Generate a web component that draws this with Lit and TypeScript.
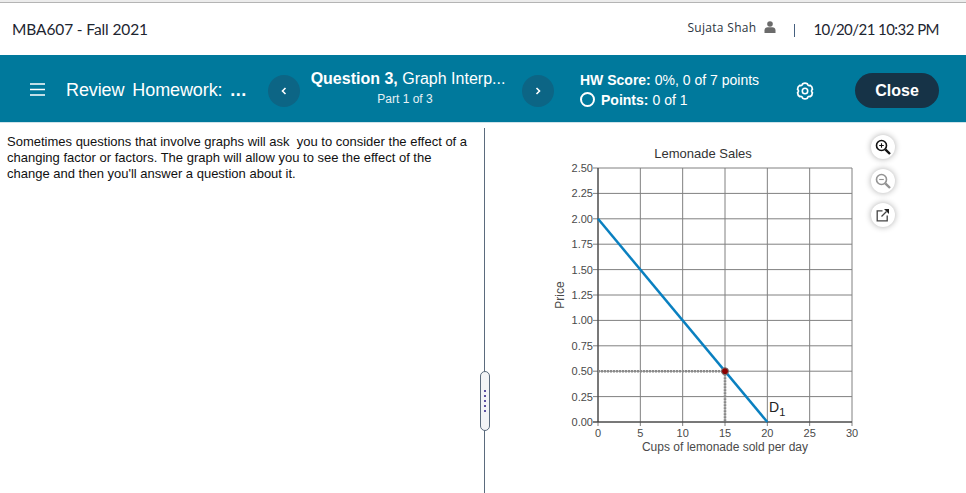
import { LitElement, html, svg, css } from 'lit';
import { customElement } from 'lit/decorators.js';

// plot coordinates, measured in app-level pixels
const X0 = 598;
const X30 = 852;
const Y0 = 422;
const Y250 = 168;
const px = (v: number) => X0 + ((X30 - X0) * v) / 30;
const py = (v: number) => Y0 - ((Y0 - Y250) * v) / 2.5;

const xTicks = [0, 5, 10, 15, 20, 25, 30];
const yTicks = [0, 0.25, 0.5, 0.75, 1, 1.25, 1.5, 1.75, 2, 2.25, 2.5];

// six soft lobes around the centre of an 18x18 box
const gearPath = () => {
  const pt = (deg: number, r: number) => {
    const a = (deg * Math.PI) / 180;
    return `${(9 + r * Math.sin(a)).toFixed(2)} ${(9 - r * Math.cos(a)).toFixed(2)}`;
  };
  let d = `M${pt(-18, 7.6)}`;
  for (let i = 0; i < 6; i++) {
    const c = i * 60;
    d += ` Q${pt(c, 8.6)} ${pt(c + 18, 7.6)} Q${pt(c + 30, 5.6)} ${pt(c + 42, 7.6)}`;
  }
  return d + 'Z';
};

@customElement('app-root')
export class AppRoot extends LitElement {
  static styles = css`
    :host {
      display: block;
      width: 966px;
      height: 493px;
      overflow: hidden;
      background: #fff;
      font-family: 'Liberation Sans', Arial, sans-serif;
      position: relative;
    }

    .topline {
      height: 3px;
      box-sizing: border-box;
      background: #ececec;
      border-bottom: 1px solid #b4b4b4;
    }

    .course {
      height: 52px;
      display: flex;
      align-items: center;
      padding: 0 27px 0 12px;
      color: #1d2530;
    }

    .course-name {
      font: 15.5px 'Lato', sans-serif;
      flex: 1;
      margin-top: -1px;
      letter-spacing: -0.12px;
    }

    .user {
      font: 12px 'Open Sans', sans-serif;
      color: #2b3440;
      letter-spacing: 0.3px;
      margin-top: -3px;
    }

    .user-icon {
      margin: -4px 0 0 8px;
    }

    .sep {
      width: 1px;
      height: 13px;
      background: #46607f;
      margin: 3px 18px 0 18px;
    }

    .date {
      font: 15px 'Lato', sans-serif;
      margin-top: -1px;
      letter-spacing: -0.55px;
    }

    .bar {
      height: 68px;
      background: #00799c;
      border-bottom: 1px solid #cfe3ea;
      box-sizing: border-box;
      padding-top: 4px;
      display: flex;
      align-items: center;
      color: #fff;
    }

    .menu {
      margin: -2px 0 0 30px;
      width: 15px;
      height: 15px;
    }

    .hw-title {
      margin-left: 21px;
      width: 186px;
      font-size: 18px;
      word-spacing: 3px;
      white-space: nowrap;
      letter-spacing: -0.1px;
    }

    .hw-title b {
      letter-spacing: 0.5px;
    }

    .nav {
      width: 32px;
      height: 32px;
      border-radius: 50%;
      background: #0c6585;
      display: flex;
      align-items: center;
      justify-content: center;
      flex: none;
    }

    .prev {
      margin-left: 16px;
    }

    .question {
      width: 216px;
      padding-right: 6px;
      text-align: center;
      margin-top: -6px;
    }

    .question .q {
      font-size: 16px;
      line-height: 20px;
      white-space: nowrap;
    }

    .question .part {
      font-size: 12px;
      line-height: 14px;
      margin: 3px 6px 0 0;
      color: #e6f1f5;
    }

    .score {
      margin: -2px 0 0 26px;
      width: 216px;
      font-size: 14px;
    }

    .score div {
      height: 20px;
      line-height: 20px;
      white-space: nowrap;
      display: flex;
      align-items: center;
    }

    .score b {
      margin-right: 4px;
    }

    .ring {
      width: 15px;
      height: 15px;
      box-sizing: border-box;
      border: 2px solid #fff;
      border-radius: 50%;
      margin-right: 6px;
    }

    .gear {
      width: 18px;
      height: 18px;
      flex: none;
    }

    .close {
      margin-left: 41px;
      width: 84px;
      height: 35px;
      border-radius: 18px;
      background: #163347;
      display: flex;
      align-items: center;
      justify-content: center;
      font-size: 16px;
      font-weight: bold;
    }

    .content {
      display: flex;
      height: 370px;
    }

    .left {
      width: 485px;
      box-sizing: border-box;
      padding: 6px 8px 0 7px;
      margin-top: 5px;
      height: 365px;
      border-right: 1px solid #5b6b7d;
      font-size: 13px;
      line-height: 16px;
      color: #111;
      flex: none;
    }

    .left p {
      margin: 0;
      white-space: pre-wrap;
    }

    .chart {
      position: absolute;
      left: 0;
      top: 0;
      pointer-events: none;
    }

    .chart text {
      font-family: 'Liberation Sans', Arial, sans-serif;
      font-size: 11px;
      fill: #4a4a4a;
    }

    .chart .title {
      font-size: 13px;
      fill: #333;
    }

    .chart .axis-label {
      font-size: 12px;
      fill: #4a4a4a;
    }

    .chart .curve-label {
      font-size: 14px;
      fill: #222;
    }

    .chart .curve-label tspan {
      font-size: 11px;
    }

    .tools {
      display: flex;
      flex-direction: column;
      gap: 10px;
      margin: 12px 0 0 386px;
      z-index: 1;
    }

    .tool {
      width: 24px;
      height: 24px;
      border-radius: 50%;
      background: #fff;
      box-shadow: 0 0 6px rgba(0, 0, 0, 0.32);
      display: flex;
      align-items: center;
      justify-content: center;
    }

    .tool.off svg {
      opacity: 0.45;
    }

    .handle {
      position: absolute;
      left: 480px;
      top: 371px;
      width: 10px;
      height: 60px;
      box-sizing: border-box;
      border: 1px solid #5b6b7d;
      border-radius: 6px;
      background: #f3f4f6;
      display: flex;
      flex-direction: column;
      align-items: center;
      justify-content: center;
      gap: 3px;
    }

    .handle i {
      width: 2px;
      height: 2px;
      background: #5a4fa0;
    }
  `;

  private renderChart() {
    return html`
      <svg class="chart" width="966" height="493" viewBox="0 0 966 493">
        ${xTicks.map(
          (v) => svg`
            <line x1=${px(v)} x2=${px(v)} y1=${Y250} y2=${Y0 + 4} stroke="#808080" />
            <text x=${px(v)} y="437" text-anchor="middle">${v}</text>
          `
        )}
        ${yTicks.map(
          (v) => svg`
            <line x1=${X0 - 5} x2=${X30} y1=${py(v)} y2=${py(v)} stroke="#808080" />
            <text x=${X0 - 5} y=${py(v) + 4} text-anchor="end">${v.toFixed(2)}</text>
          `
        )}
        <line x1=${X0} x2=${X0} y1=${Y250} y2=${Y0} stroke="#333" />
        <line x1=${X0 - 5} x2=${X30} y1=${Y0} y2=${Y0} stroke="#333" />
        <line x1=${px(0)} y1=${py(0.5)} x2=${px(15)} y2=${py(0.5)} stroke="#8a8a8a" stroke-width="2.6" stroke-dasharray="2 1" />
        <line x1=${px(15)} y1=${py(0.5)} x2=${px(15)} y2=${py(0)} stroke="#8a8a8a" stroke-width="2.6" stroke-dasharray="2 1" />
        <line x1=${px(0)} y1=${py(2)} x2=${px(20)} y2=${py(0)} stroke="#0a80c0" stroke-width="2.5" />
        <circle cx=${px(15)} cy=${py(0.5)} r="3.5" fill="#8b0000" stroke="#777" stroke-width="1" />
        <text class="title" x="703" y="158" text-anchor="middle">Lemonade Sales</text>
        <text class="axis-label" x="725" y="451" text-anchor="middle">Cups of lemonade sold per day</text>
        <text class="axis-label" transform="translate(564 295) rotate(-90)" text-anchor="middle">Price</text>
        <text class="curve-label" x="769" y="412">D<tspan dy="4">1</tspan></text>
      </svg>
    `;
  }

  render() {
    return html`
      <div class="topline"></div>
      <div class="course">
        <span class="course-name">MBA607 - Fall 2021</span>
        <span class="user">Sujata Shah</span>
        <svg class="user-icon" width="12" height="12" viewBox="0 0 12 12">
          <circle cx="6" cy="3" r="2.8" fill="#6b6b6b" />
          <path d="M0.5 12V9.5C0.5 7.5 2 6.3 3.6 6.3H8.4C10 6.3 11.5 7.5 11.5 9.5V12Z" fill="#6b6b6b" />
        </svg>
        <span class="sep"></span>
        <span class="date">10/20/21 10:32 PM</span>
      </div>

      <div class="bar">
        <svg class="menu" viewBox="0 0 15 15">
          <path d="M0 2H15M0 7.5H15M0 13H15" stroke="#fff" stroke-width="1.5" />
        </svg>
        <div class="hw-title">Review Homework: <b>...</b></div>
        <div class="nav prev">
          <svg width="6" height="8" viewBox="0 0 6 8">
            <path d="M4.5 1L1.5 4L4.5 7" fill="none" stroke="#fff" stroke-width="1.6" />
          </svg>
        </div>
        <div class="question">
          <div class="q"><b>Question 3,</b> Graph Interp...</div>
          <div class="part">Part 1 of 3</div>
        </div>
        <div class="nav">
          <svg width="6" height="8" viewBox="0 0 6 8">
            <path d="M1.5 1L4.5 4L1.5 7" fill="none" stroke="#fff" stroke-width="1.6" />
          </svg>
        </div>
        <div class="score">
          <div><b>HW Score:</b> 0%, 0 of 7 points</div>
          <div><span class="ring"></span><b>Points:</b> 0 of 1</div>
        </div>
        <svg class="gear" viewBox="0 0 18 18">
          <path d=${gearPath()} fill="none" stroke="#fff" stroke-width="1.7" stroke-linejoin="round" />
          <circle cx="9" cy="9" r="2.7" fill="none" stroke="#fff" stroke-width="1.6" />
        </svg>
        <div class="close">Close</div>
      </div>

      <div class="content">
        <div class="left">
          <p>Sometimes questions that involve graphs will ask  you to consider the effect of a
changing factor or factors. The graph will allow you to see the effect of the
change and then you'll answer a question about it.</p>
        </div>
        <div class="tools">
          <div class="tool">
            <svg width="18" height="18" viewBox="0 0 18 18">
              <circle cx="7.5" cy="7.5" r="5" fill="none" stroke="#111" stroke-width="1.6" />
              <path d="M11.3 11.3L16 16" stroke="#111" stroke-width="2.4" />
              <path d="M5.2 7.5H9.8M7.5 5.2V9.8" stroke="#111" stroke-width="1.1" />
            </svg>
          </div>
          <div class="tool off">
            <svg width="18" height="18" viewBox="0 0 18 18">
              <circle cx="7.5" cy="7.5" r="5" fill="none" stroke="#111" stroke-width="1.6" />
              <path d="M11.3 11.3L16 16" stroke="#111" stroke-width="2.4" />
              <path d="M5.2 7.5H9.8" stroke="#111" stroke-width="1.1" />
            </svg>
          </div>
          <div class="tool">
            <svg width="14" height="14" viewBox="0 0 14 14">
              <path d="M6.5 2.8H1.2V12.8H11.2V7.5" fill="none" stroke="#444" stroke-width="1.3" />
              <path d="M5.5 8.5L10.5 3.5" stroke="#444" stroke-width="1.3" />
              <path d="M8 1H13V6Z" fill="#222" />
            </svg>
          </div>
        </div>
      </div>

      ${this.renderChart()}

      <div class="handle"><i></i><i></i><i></i><i></i><i></i></div>
    `;
  }
}

declare global {
  interface HTMLElementTagNameMap {
    'app-root': AppRoot;
  }
}
